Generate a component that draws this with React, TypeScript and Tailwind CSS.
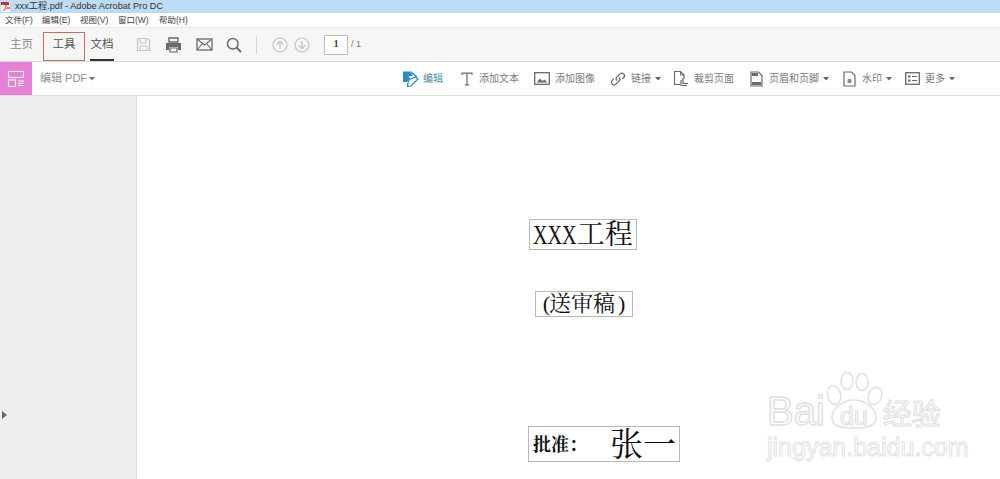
import React from "react";

const sans = "font-['Liberation_Sans','Noto_Sans_CJK_SC',sans-serif]";
const serif = "font-['Liberation_Serif','Noto_Serif_CJK_SC','Noto_Sans_CJK_SC',serif]";

const Caret = ({ c = "#666" }: { c?: string }) => (
  <svg width="6" height="4" viewBox="0 0 6 4" className="ml-[4px] shrink-0"><path d="M0 0h6L3 3.5z" fill={c} /></svg>
);

const G = ({ w = 16, h = 16, children }: { w?: number; h?: number; children: React.ReactNode }) => (
  <svg width={w} height={h} viewBox={`0 0 ${w} ${h}`} fill="none" className="shrink-0">{children}</svg>
);

function Tool({ icon, label, caret, className = "", labelClass = "text-[#7a7a7a]" }: { icon: React.ReactNode; label: string; caret?: boolean; className?: string; labelClass?: string }) {
  return (
    <div className={`flex items-center ${className}`}>
      {icon}
      <span className={`text-[10px] leading-none whitespace-nowrap ${labelClass}`}>{label}</span>
      {caret && <Caret />}
    </div>
  );
}

export default function App() {
  return (
    <div className={`w-[1000px] h-[479px] overflow-hidden flex flex-col bg-white ${sans}`}>
      {/* title bar */}
      <div className="h-[13px] shrink-0 flex items-center bg-[#bcdcf5]">
        <svg width="11" height="12" viewBox="0 0 11 12" className="ml-[1px] shrink-0">
          <path d="M0 1h9v10H0z" fill="#fff" />
          <path d="M0 1h8v3H0z" fill="#b8353a" />
          <path d="M2 10c2-2 3-4 3-6 0 2 1 3 4 3-3 0-5 1-7 3z" stroke="#d0403f" strokeWidth="0.8" fill="none" />
        </svg>
        <span className="ml-[3px] text-[9.2px] leading-none text-[#333] whitespace-nowrap">xxx工程.pdf - Adobe Acrobat Pro DC</span>
      </div>
      {/* menu bar */}
      <div className="h-[15px] shrink-0 flex items-center bg-white pl-[5px] pt-[1px] text-[8.5px] leading-none text-[#444] border-b border-[#ececec]">
        <span className="w-[37px]">文件(F)</span>
        <span className="w-[38px]">编辑(E)</span>
        <span className="w-[38px]">视图(V)</span>
        <span className="w-[41px]">窗口(W)</span>
        <span>帮助(H)</span>
      </div>
      {/* main toolbar */}
      <div className="h-[34px] shrink-0 flex items-center bg-[#f6f6f6] border-b border-[#d8d8d8]">
        <span className="ml-[10px] w-[33px] pt-[1px] text-[11.5px] leading-none text-[#8a8a8a]">主页</span>
        <div className="self-end w-[42px] h-[29px] pb-[3px] flex items-center justify-center border border-[#c96a64] text-[11.5px] text-[#555]">工具</div>
        <div className="ml-[5px] w-[24px] h-[33px] pt-[3px] flex items-center justify-center border-b-2 border-[#333] text-[11.5px] text-[#555]">文档</div>
        <div className="ml-[22px]">
          <G w={15} h={15}><path d="M1.5 1.5h10l2 2v10h-12z" stroke="#c6c6c6" strokeWidth="1.2" /><path d="M4 2v4h6V2M4 13V9h7v4" stroke="#c6c6c6" strokeWidth="1" /></G>
        </div>
        <div className="ml-[14px]">
          <G w={17} h={16}><path d="M4 1h9v4H4z" stroke="#6a6a6a" strokeWidth="1.4" /><path d="M1 6h15v7h-3v-3H4v3H1z" fill="#6a6a6a" /><path d="M5 11h7v4H5z" stroke="#6a6a6a" strokeWidth="1.2" /></G>
        </div>
        <div className="ml-[14px]">
          <G w={17} h={13}><rect x="1" y="1" width="15" height="11" stroke="#6a6a6a" strokeWidth="1.3" /><path d="M1 1l7.5 6L16 1M1 12l5.5-6.5M16 12l-5.5-6.5" stroke="#6a6a6a" strokeWidth="1.1" /></G>
        </div>
        <div className="ml-[13px]">
          <G w={16} h={16}><circle cx="6.8" cy="6.8" r="5.3" stroke="#6a6a6a" strokeWidth="1.5" /><path d="M10.5 10.5l4.5 4.5" stroke="#6a6a6a" strokeWidth="1.8" /></G>
        </div>
        <div className="ml-[14px] w-px h-[18px] bg-[#d6d6d6]" />
        <div className="ml-[15px]">
          <G w={16} h={16}><circle cx="8" cy="8" r="7" stroke="#c2c2c2" strokeWidth="1.2" /><path d="M8 12V4.5M4.8 7.5L8 4.3l3.2 3.2" stroke="#c2c2c2" strokeWidth="1.3" /></G>
        </div>
        <div className="ml-[6px]">
          <G w={16} h={16}><circle cx="8" cy="8" r="7" stroke="#c2c2c2" strokeWidth="1.2" /><path d="M8 4v7.5M4.8 8.5L8 11.7l3.2-3.2" stroke="#c2c2c2" strokeWidth="1.3" /></G>
        </div>
        <div className={`ml-[14px] w-[24px] h-[20px] flex items-center justify-center border border-[#bdbdbd] bg-white text-[9.5px] font-bold text-[#333] ${serif}`}>1</div>
        <span className="ml-[3px] text-[9px] text-[#777]">/ 1</span>
      </div>
      {/* secondary toolbar */}
      <div className="h-[34px] shrink-0 flex items-center bg-white border-b border-[#dcdcdc]">
        <div className="w-[32px] h-full flex items-center justify-center bg-[#e880d8]">
          <G w={18} h={18}>
            <rect x="1.5" y="1.5" width="15" height="6" stroke="#fff" strokeWidth="1.1" />
            <rect x="1.5" y="10" width="7" height="6.5" stroke="#fff" strokeWidth="1.1" />
            <path d="M11 11h6M11 13.3h6M11 15.6h6" stroke="#fff" strokeWidth="1" />
          </G>
        </div>
        <span className="ml-[8px] text-[11px] text-[#8c8c8c] whitespace-nowrap">编辑 PDF</span>
        <svg width="6" height="4" viewBox="0 0 6 4" className="ml-[2px] shrink-0"><path d="M0 0h6L3 3.5z" fill="#777" /></svg>
        <div className="ml-[307px] flex items-center">
          <Tool
            className="w-[59px]"
            label="编辑"
            labelClass="text-[#4d87a8]"
            icon={
              <span className="mr-[3px]">
                <G w={18} h={18}>
                  <path d="M1 1.5h6.5l3 3v1.5H6.5L8 8.5 5 12H1" fill="#2d88c4" />
                  <path d="M8.5 1.5l6 5-3 3" stroke="#2d88c4" strokeWidth="1.3" />
                  <path d="M6 12.5l1.5-3 6-2.5 2.5 2-7 7-3.5.5z" stroke="#2d88c4" strokeWidth="1.2" fill="#fff" />
                </G>
              </span>
            }
          />
          <Tool
            className="w-[73px]"
            label="添加文本"
            icon={<span className="mr-[6px]"><G w={12} h={14}><path d="M1 3V1.2h10V3M6 1.2v11.6M3.8 12.8h4.4" stroke="#6a6a6a" strokeWidth="1.2" /></G></span>}
          />
          <Tool
            className="w-[76px]"
            label="添加图像"
            icon={<span className="mr-[5px]"><G w={16} h={13}><rect x="0.7" y="0.7" width="14.6" height="11.6" stroke="#6a6a6a" strokeWidth="1.3" /><path d="M2.5 10.5l3.5-4 2.5 2.5 2-1.5 3 3z" fill="#6a6a6a" /></G></span>}
          />
          <Tool
            className="w-[63px]"
            label="链接"
            caret
            icon={<span className="mr-[5px]"><G w={16} h={16}><path d="M7 9.5a2.6 2.6 0 0 1 0-3.6l3-3a2.6 2.6 0 0 1 3.7 3.7l-1.5 1.5M9 6.5a2.6 2.6 0 0 1 0 3.6l-3 3a2.6 2.6 0 0 1-3.7-3.7l1.5-1.5" stroke="#6a6a6a" strokeWidth="1.3" /></G></span>}
          />
          <Tool
            className="w-[77px]"
            label="裁剪页面"
            icon={<span className="mr-[6px]"><G w={15} h={17}><path d="M7 14.5H1.5v-13h6l3.5 3.5v4" stroke="#6a6a6a" strokeWidth="1.2" /><path d="M7.5 1.5V5H11" stroke="#6a6a6a" strokeWidth="1" /><path d="M8 10v5.5h6M10 8v5.5h5" stroke="#6a6a6a" strokeWidth="1.2" /></G></span>}
          />
          <Tool
            className="w-[93px]"
            label="页眉和页脚"
            caret
            icon={<span className="mr-[6px]"><G w={13} h={16}><path d="M1 1h7.5L12 4.5V15H1z" stroke="#6a6a6a" strokeWidth="1.2" /><path d="M2 2h6v3H2zM2 11h9v3H2z" fill="#6a6a6a" /></G></span>}
          />
          <Tool
            className="w-[62px]"
            label="水印"
            caret
            icon={<span className="mr-[6px]"><G w={13} h={16}><path d="M1 1h7.5L12 4.5V15H1z" stroke="#6a6a6a" strokeWidth="1.2" /><circle cx="6.5" cy="10" r="2.2" fill="#8a8a8a" /></G></span>}
          />
          <Tool
            label="更多"
            caret
            icon={<span className="mr-[5px]"><G w={15} h={13}><rect x="0.7" y="0.7" width="13.6" height="11.6" stroke="#6a6a6a" strokeWidth="1.3" /><path d="M3 3.5h2.5v2H3zM3 7.5h2.5v2H3z" fill="#6a6a6a" /><path d="M7 4.5h5M7 8.5h5" stroke="#6a6a6a" strokeWidth="1.1" /></G></span>}
          />
        </div>
      </div>
      {/* body */}
      <div className="flex-1 flex min-h-0">
        <div className="w-[137px] shrink-0 bg-[#efefef] border-r border-[#d9d9d9] flex items-end pb-[60px] pl-[2px]">
          <svg width="5" height="8" viewBox="0 0 5 8"><path d="M0 0l5 4-5 4z" fill="#666" /></svg>
        </div>
        <div className={`relative flex-1 flex flex-col items-start bg-white text-[#111] ${serif}`}>
          <div className="ml-[392px] mt-[123px] w-[108px] h-[31px] pt-[1px] flex items-center justify-center border border-[#b9b9b9] text-[28px] leading-none whitespace-nowrap">
            <span className="inline-block origin-left scale-x-[0.72] -mr-[17px]">XXX</span>
            <span>工程</span>
          </div>
          <div className="ml-[398px] mt-[41px] w-[98px] h-[26px] flex items-center justify-center border border-[#b9b9b9] text-[22px] leading-none whitespace-nowrap">
            <span className="-mr-[1px]">(</span>
            <span>送审稿</span>
            <span className="ml-[3px]">)</span>
          </div>
          <div className="ml-[391px] mt-[109px] w-[152px] h-[36px] pt-[2px] flex items-center border border-[#b9b9b9] pl-[4px] leading-none whitespace-nowrap font-bold">
            <span className="text-[18px]">批准：</span>
            <span className="ml-[23px] text-[33px] font-normal">张一</span>
          </div>
          {/* watermark */}
          <div className={`absolute left-[630px] top-[276px] w-[180px] h-[85px] ${sans}`}>
            <svg width="60" height="60" viewBox="0 0 60 60" fill="none" stroke="#e2e2e2" strokeWidth="1.6" className="absolute left-[58px] -top-[1px]">
              <ellipse cx="9" cy="24" rx="6.5" ry="9.5" transform="rotate(-15 9 24)" />
              <ellipse cx="22" cy="10" rx="6" ry="8.5" />
              <ellipse cx="37" cy="11" rx="6" ry="8.5" />
              <ellipse cx="50" cy="25" rx="6.5" ry="9" transform="rotate(20 50 25)" />
              <path d="M7 47c0-11 12-18 22-18s22 7 22 18c0 9-11 10-22 10S7 56 7 47z" />
            </svg>
            <div className="absolute left-0 top-[19px] flex items-baseline text-[40px] leading-none text-white [-webkit-text-stroke:1.4px_#e0e0e0] whitespace-nowrap">
              <span>Bai</span>
              <span className="ml-[15px] text-[25px] [-webkit-text-stroke:1.1px_#e0e0e0]">du</span>
              <span className="ml-[15px] text-[29px] [-webkit-text-stroke:1px_#e0e0e0]">经验</span>
            </div>
            <div className="absolute left-0 top-[63px] text-[25px] leading-none text-white [-webkit-text-stroke:1px_#e2e2e2] whitespace-nowrap">jingyan.baidu.com</div>
          </div>
        </div>
      </div>
    </div>
  );
}
